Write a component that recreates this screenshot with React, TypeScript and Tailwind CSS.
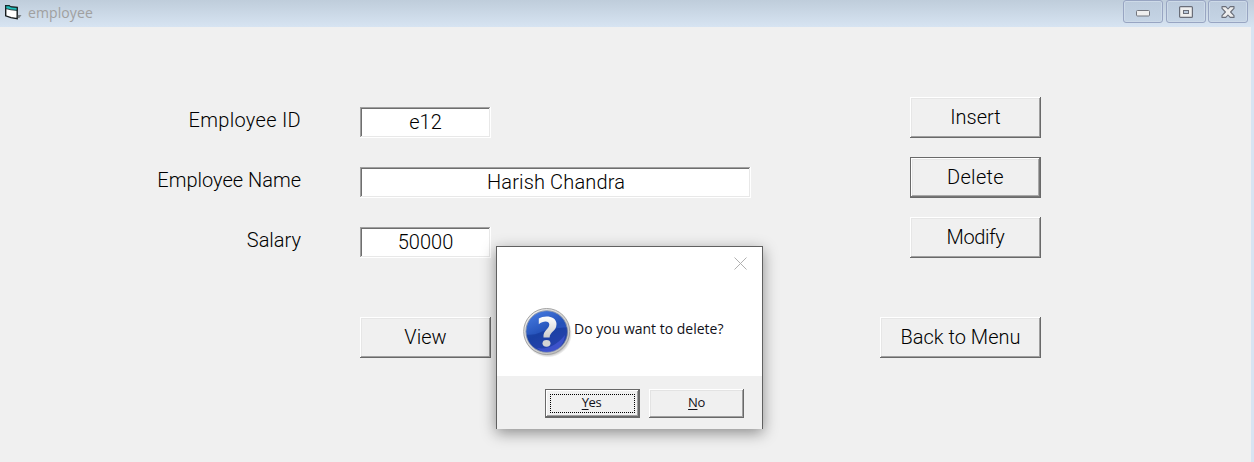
import type { ReactNode } from "react";

function FormButton({ children, focused = false, className = "" }: { children: ReactNode; focused?: boolean; className?: string }) {
  const edge = focused
    ? "border border-[#696969] shadow-[inset_-1px_-1px_0_#757575,inset_1px_1px_0_#fff,inset_-2px_-2px_0_#a8a8a8,inset_2px_2px_0_#e6e6e6]"
    : "shadow-[inset_-1px_-1px_0_#696969,inset_1px_1px_0_#fff,inset_-2px_-2px_0_#a0a0a0,inset_2px_2px_0_#e6e6e6]";
  return (
    <button className={`flex h-[41px] shrink-0 items-center justify-center whitespace-nowrap bg-[#f0f0f0] pb-[2px] ${edge} ${className}`}>
      {children}
    </button>
  );
}

function Field({ children, className = "" }: { children: ReactNode; className?: string }) {
  return (
    <div
      className={`flex h-[31px] items-center justify-center whitespace-nowrap bg-white pb-[2px] shadow-[inset_-1px_-1px_0_#fff,inset_1px_1px_0_#a0a0a0,inset_-2px_-2px_0_#e8e8e8,inset_2px_2px_0_#6e6e6e] ${className}`}
    >
      {children}
    </div>
  );
}

function FormRow({ label, field, action }: { label: ReactNode; field: ReactNode; action: ReactNode }) {
  return (
    <div className="flex h-[60px] items-start">
      <div className="mt-[11px] flex w-[301px] justify-end whitespace-nowrap leading-6">{label}</div>
      <div className="mt-[10px] ml-[59px] w-[550px]">{field}</div>
      {action}
    </div>
  );
}

function WindowButton({ children, className = "" }: { children: ReactNode; className?: string }) {
  return (
    <button
      className={`flex h-[23px] w-[40px] items-center justify-center rounded-[3px] border border-[#98a5c2] bg-linear-to-b from-[#bccbdc] to-[#c5d4e5] shadow-[inset_0_0_0_1px_#cddae8] ${className}`}
    >
      {children}
    </button>
  );
}

function FormIcon() {
  return (
    <svg width="18" height="16" viewBox="0 0 18 16">
      <path d="M1.7 1.8 5 1.8 7 3 13.2 3.5V14.6L7 13.6 1.7 11.8Z" fill="#fff" stroke="#151b1d" strokeWidth="1.4" />
      <path d="M1.8 1.8 5 1.8 7 3 13 3.5V6.4L7 5.8 1.8 4.6Z" fill="#1fc0bc" stroke="#151b1d" strokeWidth="0.8" />
      <path d="M13.9 11h3.6L15.3 14h-1.4Z" fill="#777f86" />
    </svg>
  );
}

function QuestionIcon() {
  return (
    <svg width="50" height="52" viewBox="0 0 50 52">
      <defs>
        <linearGradient id="ring" x1="0" y1="0" x2="1" y2="1">
          <stop offset="0" stopColor="#f4f4f4" />
          <stop offset="1" stopColor="#b8b8b8" />
        </linearGradient>
        <linearGradient id="ball" x1="0.2" y1="0" x2="0.7" y2="1">
          <stop offset="0" stopColor="#467ae0" />
          <stop offset="0.5" stopColor="#2451b8" />
          <stop offset="1" stopColor="#3f55cc" />
        </linearGradient>
        <linearGradient id="mark" x1="0" y1="0" x2="0" y2="1">
          <stop offset="0" stopColor="#ffffff" />
          <stop offset="1" stopColor="#cccccc" />
        </linearGradient>
        <radialGradient id="shade">
          <stop offset="0.8" stopColor="#666" stopOpacity="0.6" />
          <stop offset="1" stopColor="#666" stopOpacity="0" />
        </radialGradient>
      </defs>
      <circle cx="25" cy="26.5" r="24" fill="url(#shade)" />
      <circle cx="23.7" cy="24.5" r="23" fill="url(#ring)" stroke="#a3a3a3" />
      <circle cx="23.7" cy="24.5" r="20.8" fill="url(#ball)" stroke="#8a95ab" strokeWidth="0.9" />
      <path d="M3.6 27.5C13 29 18 24 25 22.5C33 21 40 20.5 44 20.5C47 33.5 37 44.5 24 44.5C13 44.5 5 37.5 3.6 27.5Z" fill="#092984" opacity="0.4" />
      <path d="M14 41C24 43 34 38 42 28C41 39 33 45 24 45C20 45 17 43 14 41Z" fill="#5362e8" opacity="0.5" />
      <path d="M15.8 17.2V11.6C21 7.8 33.5 8.5 33.5 17C33.5 24.5 26.8 24.6 26.6 30.5H20.5C19.8 23.2 26.3 22.2 26.3 17.5C26.3 13.4 19.8 13.8 15.8 17.2Z" fill="url(#mark)" />
      <ellipse cx="23.5" cy="36.3" rx="4" ry="3.4" fill="#d4d4d4" />
    </svg>
  );
}

function Dialog() {
  return (
    <div
      role="dialog"
      className="absolute top-[246px] left-[496px] flex h-[183px] w-[267px] flex-col border border-b-0 border-[#606060] bg-white font-['Open_Sans','Noto_Sans',sans-serif] text-[14px] font-normal text-[#101018] shadow-[0_4px_14px_rgba(0,0,0,0.42)]"
    >
      <div className="flex h-[60px] shrink-0 justify-end pt-[10px] pr-[15px]">
        <svg width="13" height="13" viewBox="0 0 13 13">
          <path d="M.5.5 12.5 12.5M12.5.5.5 12.5" stroke="#b0b0b0" fill="none" />
        </svg>
      </div>
      <div className="flex h-[69px] shrink-0 items-start pl-[26px]">
        <QuestionIcon />
        <span className="mt-[12px] ml-[1px] whitespace-nowrap leading-[20px]">Do you want to delete?</span>
      </div>
      <div className="flex flex-1 items-start justify-end gap-[9px] bg-[#f0f0f0] pt-[13px] pr-[18px] text-[13px] font-medium tracking-[-0.4px]">
        <button className="flex h-[29px] w-[95px] items-stretch border border-[#696969] p-[4px] shadow-[inset_-1px_-1px_0_#696969,inset_1px_1px_0_#fff,inset_-2px_-2px_0_#a0a0a0]">
          <span className="flex flex-1 items-center justify-center border border-dotted border-black pr-[2px] pb-[2px]">
            <span>
              <u className="underline-offset-2">Y</u>es
            </span>
          </span>
        </button>
        <button className="flex h-[29px] w-[95px] items-center justify-center pb-[2px] shadow-[inset_-1px_-1px_0_#696969,inset_1px_1px_0_#fff,inset_-2px_-2px_0_#a0a0a0,inset_2px_2px_0_#e3e3e3]">
          <span>
            <u className="underline-offset-2">N</u>o
          </span>
        </button>
      </div>
    </div>
  );
}

export default function App() {
  return (
    <div className="relative flex h-[462px] w-[1254px] flex-col overflow-hidden bg-[#f0f0f0] font-[Roboto,'Liberation_Sans',sans-serif] text-[20px] font-light text-black">
      <header className="flex h-[27px] shrink-0 items-start bg-linear-to-b from-[#bfcddb] to-[#d7e4f2] pr-[6px]">
        <div className="mt-[4px] ml-[4px]">
          <FormIcon />
        </div>
        <h1 className="mt-[3px] ml-[6px] flex-1 font-['Open_Sans','Noto_Sans',sans-serif] text-[14px] leading-5 font-normal tracking-[0.1px] text-[#a0a0a0]">employee</h1>
        <div className="flex gap-[2px]">
          <WindowButton>
            <svg width="14" height="7" viewBox="0 0 14 7" className="mt-[4px]">
              <rect x=".5" y=".5" width="13" height="5.5" rx="1" fill="#eee" stroke="#73767e" />
            </svg>
          </WindowButton>
          <WindowButton className="ml-[1px]">
            <svg width="14" height="12" viewBox="0 0 14 12">
              <rect x=".6" y=".6" width="12.8" height="10.8" rx="1" fill="#eee" stroke="#696d78" strokeWidth="1.2" />
              <rect x="4.5" y="4.5" width="5" height="3" fill="#b9c9dc" stroke="#696d78" />
            </svg>
          </WindowButton>
          <WindowButton>
            <svg width="14" height="12" viewBox="0 0 14 12">
              <path d="M1 .6H4.8L7 3 9.2 .6H13V2.4L9.6 6 13 9.6V11.4H9.2L7 9 4.8 11.4H1V9.6L4.4 6 1 2.4Z" fill="#eee" stroke="#696d78" strokeWidth="1.1" strokeLinejoin="round" />
            </svg>
          </WindowButton>
        </div>
      </header>
      <main className="flex flex-1 flex-col border-r-[3px] border-[#d7e4f2] pt-[70px]">
        <FormRow
          label={<span className="tracking-[0.3px]">Employee ID</span>}
          field={<Field className="w-[131px]">e12</Field>}
          action={<FormButton className="w-[131px]">Insert</FormButton>}
        />
        <FormRow
          label={<span>Employee Name</span>}
          field={<Field className="w-[391px]"><span className="ml-px tracking-[0.15px]">Harish Chandra</span></Field>}
          action={<FormButton focused className="w-[131px]"><span className="tracking-[0.3px]">Delete</span></FormButton>}
        />
        <FormRow
          label={<span>Salary</span>}
          field={<Field className="w-[131px]">50000</Field>}
          action={<FormButton className="w-[131px]"><span className="tracking-[-0.4px]">Modify</span></FormButton>}
        />
        <div className="mt-[40px] flex justify-between pr-[210px] pl-[360px]">
          <FormButton className="w-[131px]">View</FormButton>
          <FormButton className="w-[161px]">Back to Menu</FormButton>
        </div>
      </main>
      <Dialog />
    </div>
  );
}
